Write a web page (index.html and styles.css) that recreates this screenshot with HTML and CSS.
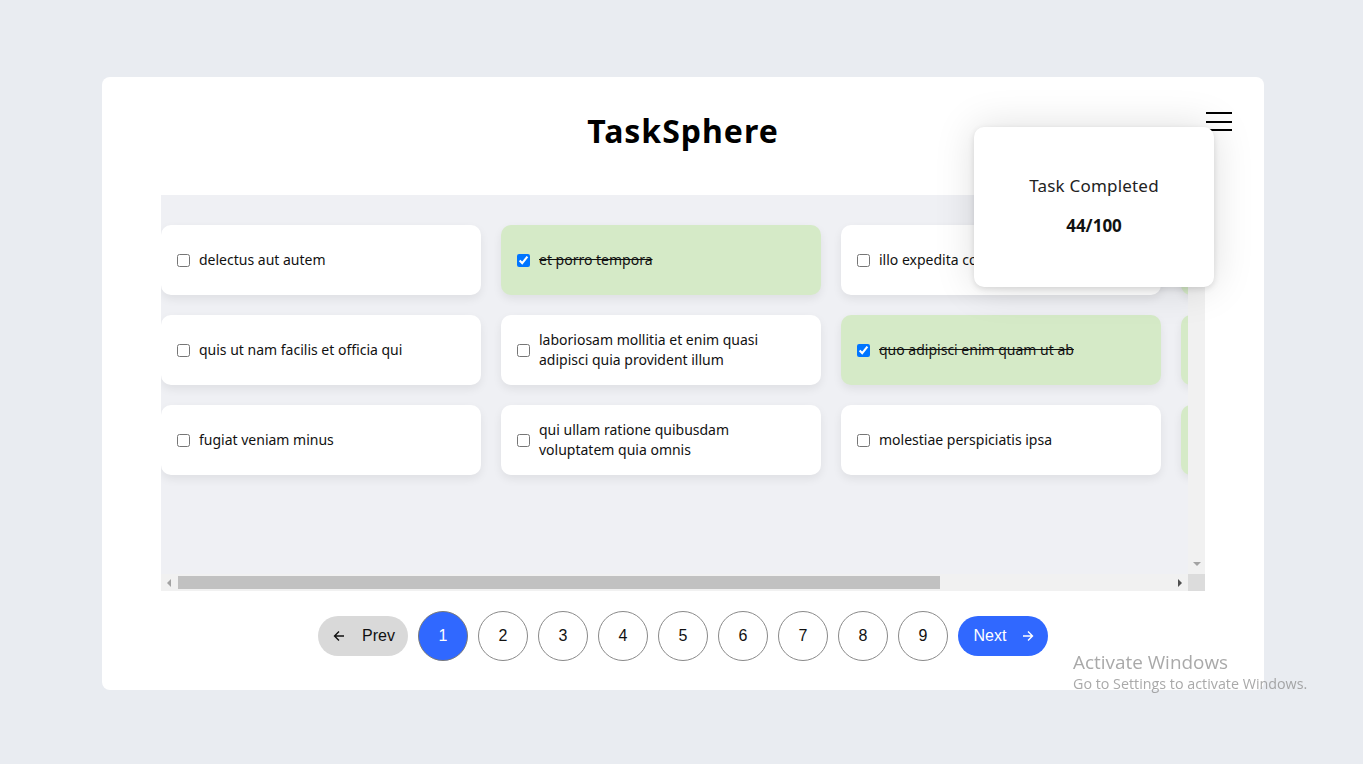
FILE: index.html
```html
<!DOCTYPE html>
<html lang="en">
<head>
<meta charset="utf-8">
<title>TaskSphere</title>
<link rel="stylesheet" href="styles.css">
</head>
<body>
<main class="app">
  <h1 class="title">TaskSphere</h1>
  <button class="menu" aria-label="menu"><span></span><span></span><span></span></button>
  <div class="popup">
    <p class="popup-label">Task Completed</p>
    <p class="popup-count">44/100</p>
  </div>
  <section class="board">
    <div class="viewport">
      <div class="grid">
        <label class="task"><input type="checkbox"><span>delectus aut autem</span></label>
        <label class="task"><input type="checkbox"><span>quis ut nam facilis et officia qui</span></label>
        <label class="task"><input type="checkbox"><span>fugiat veniam minus</span></label>
        <label class="task done"><input type="checkbox" checked><span>et porro tempora</span></label>
        <label class="task"><input type="checkbox"><span>laboriosam mollitia et enim quasi adipisci quia provident illum</span></label>
        <label class="task"><input type="checkbox"><span>qui ullam ratione quibusdam voluptatem quia omnis</span></label>
        <label class="task"><input type="checkbox"><span>illo expedita consequatur quia in</span></label>
        <label class="task done"><input type="checkbox" checked><span>quo adipisci enim quam ut ab</span></label>
        <label class="task"><input type="checkbox"><span>molestiae perspiciatis ipsa</span></label>
        <label class="task done"><input type="checkbox" checked><span>illo est ratione doloremque quia maiores aut</span></label>
        <label class="task done"><input type="checkbox" checked><span>vero rerum temporibus dolor</span></label>
        <label class="task done"><input type="checkbox" checked><span>ipsa repellendus fugit nisi</span></label>
      </div>
    </div>
    <div class="vbar"><span class="arrow-down"></span></div>
    <div class="hbar"><span class="arrow-left"></span><span class="hthumb"></span><span class="arrow-right"></span></div>
    <div class="corner"></div>
  </section>
  <nav class="pager">
    <button class="step prev"><svg width="12" height="12" viewBox="0 0 12 12"><path d="M11 6H1.5M6 1.5L1.5 6 6 10.5" fill="none" stroke="#111" stroke-width="1.4"/></svg><span>Prev</span></button>
    <button class="num active">1</button>
    <button class="num">2</button>
    <button class="num">3</button>
    <button class="num">4</button>
    <button class="num">5</button>
    <button class="num">6</button>
    <button class="num">7</button>
    <button class="num">8</button>
    <button class="num">9</button>
    <button class="step next"><span>Next</span><svg width="12" height="12" viewBox="0 0 12 12"><path d="M1 6h9.5M6 1.5L10.5 6 6 10.5" fill="none" stroke="#fff" stroke-width="1.4"/></svg></button>
  </nav>
</main>
<div class="watermark">
  <div class="wm-title">Activate Windows</div>
  <div class="wm-sub">Go to Settings to activate Windows.</div>
</div>
</body>
</html>
```
FILE: styles.css
```css
* { box-sizing: border-box; }
html, body { margin: 0; padding: 0; }
body {
  background: #e9ecf1;
  font-family: "Noto Sans", "Open Sans", sans-serif;
  color: #111;
  padding-top: 77px;
}
.app {
  position: relative;
  width: 1162px;
  margin: 0 0 0 102px;
  background: #fff;
  border-radius: 8px;
  padding: 30px 59px 29px;
}
.title {
  margin: 0;
  height: 88px;
  text-align: center;
  font-size: 32px;
  letter-spacing: 1px;
  font-weight: 700;
  line-height: 48px;
  color: #000;
}
.menu {
  position: absolute;
  top: 35px;
  right: 32px;
  width: 26px;
  height: 19px;
  padding: 0;
  border: 0;
  background: transparent;
  display: flex;
  flex-direction: column;
  justify-content: space-between;
}
.menu span { display: block; height: 2px; background: #000; }
.popup {
  position: absolute;
  top: 50px;
  left: 872px;
  width: 240px;
  height: 160px;
  background: #fff;
  border-radius: 10px;
  box-shadow: 0 0 40px rgba(0,0,0,0.13), 0 2px 6px rgba(0,0,0,0.12);
  z-index: 5;
  display: flex;
  flex-direction: column;
  align-items: center;
  padding-top: 47px;
}
.popup p { margin: 0; }
.popup-label { font-size: 17px; letter-spacing: 0.2px; color: #222; line-height: 24px; }
.popup-count { font-size: 17px; font-weight: 700; margin-top: 16px !important; line-height: 24px; }
.board {
  height: 396px;
  background: #eff0f4;
  display: grid;
  grid-template-columns: 1fr 17px;
  grid-template-rows: 1fr 17px;
}
.viewport { overflow: hidden; }
.grid {
  display: grid;
  grid-template-rows: repeat(3, 70px);
  grid-auto-flow: column;
  grid-auto-columns: 320px;
  gap: 20px;
  padding-top: 30px;
  width: max-content;
}
.task {
  display: flex;
  align-items: center;
  gap: 9px;
  padding: 0 16px;
  background: #fff;
  border-radius: 10px;
  box-shadow: 0 4px 10px rgba(0,0,0,0.07);
  font-size: 14px;
  line-height: 20px;
  color: #111;
}
.task input { margin: 0; width: 13px; height: 13px; flex: none; }
.task.done { background: #d5eac7; }
.task.done span { text-decoration: line-through; }
.vbar {
  background: #f1f1f1;
  display: flex;
  flex-direction: column;
  justify-content: flex-end;
  align-items: center;
  padding-bottom: 8px;
}
.arrow-down {
  width: 0; height: 0;
  border-left: 4px solid transparent;
  border-right: 4px solid transparent;
  border-top: 4px solid #a3a3a3;
}
.hbar {
  background: #f1f1f1;
  display: flex;
  align-items: center;
  padding: 0 6px 0 6px;
}
.arrow-left {
  width: 0; height: 0;
  border-top: 4px solid transparent;
  border-bottom: 4px solid transparent;
  border-right: 4px solid #a3a3a3;
  margin-right: 7px;
}
.hthumb {
  width: 762px;
  height: 13px;
  background: #c1c1c1;
}
.arrow-right {
  width: 0; height: 0;
  border-top: 4px solid transparent;
  border-bottom: 4px solid transparent;
  border-left: 4px solid #505050;
  margin-left: auto;
}
.corner { background: #dcdcdc; }
.pager {
  display: flex;
  justify-content: center;
  align-items: center;
  gap: 10px;
  margin-top: 20px;
  font-family: "Liberation Sans", Arial, sans-serif;
}
.num {
  width: 50px;
  height: 50px;
  border-radius: 50%;
  border: 1px solid #8a8a8a;
  background: #fff;
  font: 16px "Liberation Sans", Arial, sans-serif;
  color: #111;
  padding: 0;
}
.num.active { background: #3068ff; color: #fff; border-color: #7a7a7a; }
.step {
  width: 90px;
  height: 40px;
  border: 0;
  border-radius: 20px;
  font: 16px "Liberation Sans", Arial, sans-serif;
  display: flex;
  align-items: center;
  justify-content: center;
  padding: 0;
}
.prev { background: #d9d9d9; color: #111; gap: 17px; padding-left: 2px; }
.next { background: #3068ff; color: #fff; gap: 16px; padding-left: 2px; }
.watermark {
  position: fixed;
  left: 1073px;
  top: 650px;
  color: rgba(140,140,140,0.75);
  font-family: "Open Sans", "Noto Sans", sans-serif;
}
.wm-title { font-size: 18.9px; line-height: 24px; }
.wm-sub { font-size: 14.3px; line-height: 20px; }
```
